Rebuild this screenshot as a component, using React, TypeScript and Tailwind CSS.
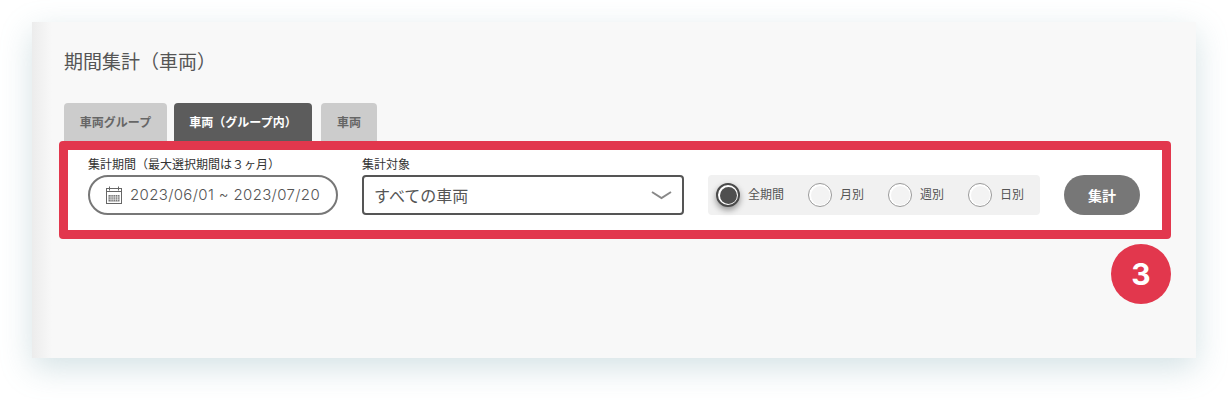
const jp = "font-['Noto_Sans_CJK_JP','Noto_Sans',sans-serif]";

function CalendarIcon() {
  return (
    <svg className="w-4 h-[18px]" viewBox="0 0 16 18" fill="none" stroke="#666" strokeWidth="1">
      <rect x="0.5" y="2.5" width="15" height="15" />
      <path d="M3.500 0.500v4M12.500 0.500v4" />
      <path d="M0.500 5.500h15" />
      <rect x="2.500" y="9" width="11" height="6.500" fill="#777" stroke="none" />
      <path d="M2.500 11h11M2.500 13.200h11M5 9v6.500M7.200 9v6.500M9.400 9v6.500M11.600 9v6.500" stroke="#fff" strokeWidth="0.6" />
    </svg>
  );
}

function Radio({ label, checked, width }: { label: string; checked?: boolean; width: string }) {
  return (
    <label className={`flex items-center gap-[8px] ${width}`}>
      {checked ? (
        <span className="w-6 h-6 rounded-full bg-white border-[2px] border-[#4a4a4a] flex items-center justify-center shadow-[0_3px_6px_rgba(0,0,0,0.4)]">
          <span className="w-[17px] h-[17px] rounded-full bg-[#4f4f4f]" />
        </span>
      ) : (
        <span className="w-6 h-6 rounded-full bg-white border border-[#999] flex items-center justify-center">
          <span className="w-[19px] h-[19px] rounded-full bg-[#f3f3f3]" />
        </span>
      )}
      <span className="text-[12px] text-[#555] leading-none -mt-[2px]">{label}</span>
    </label>
  );
}

export default function App() {
  return (
    <div className={`relative h-[400px] w-[1228px] overflow-hidden bg-white pt-[22px] pl-[32px] ${jp}`}>
      <div className="relative h-[336px] w-[1164px] bg-[#f8f8f8] pt-[25px] pl-[32px] shadow-[0_10px_30px_rgba(120,165,175,0.32)]">
        {/* left edge shade */}
        <div className="absolute left-0 top-0 bottom-0 w-[20px] bg-gradient-to-r from-[#ececec] to-[#f8f8f8]" />

        <h1 className="relative text-[19px] leading-[27px] text-[#555] font-normal">期間集計（車両）</h1>

        {/* Tabs */}
        <div className="relative mt-[29px] flex h-[38px] items-start">
          <div className="h-[38px] w-[103px] rounded-t-[4px] bg-[#cccccc] pt-[10px] text-center text-[12px] leading-[18px] font-bold text-[#666]">車両グループ</div>
          <div className="ml-[7px] h-[38px] w-[138px] rounded-t-[4px] bg-[#5c5c5c] pt-[10px] text-center text-[12px] leading-[18px] font-bold text-white">車両（グループ内）</div>
          <div className="ml-[9px] h-[38px] w-[56px] rounded-t-[4px] bg-[#cccccc] pt-[10px] text-center text-[12px] leading-[18px] font-bold text-[#666]">車両</div>
        </div>

        {/* Filter form, outlined in red */}
        <div className="relative -ml-[5px] h-[98px] w-[1112px] rounded-[4px] border-[9px] border-[#e2374d] bg-white pl-[20px] pt-[5px]">
          <div className="flex items-end">
            <div className="w-[250px]">
              <div className="text-[12px] leading-[18px] text-[#333] whitespace-nowrap">集計期間（最大選択期間は３ヶ月）</div>
              <div className="mt-[2px] flex h-10 items-center gap-[8px] rounded-full border-[2px] border-[#777] bg-white pl-[16px]">
                <CalendarIcon />
                <span className="font-['Inter',sans-serif] text-[15px] font-light text-[#555] tracking-[0.35px] whitespace-nowrap">2023/06/01 ~ 2023/07/20</span>
              </div>
            </div>
            <div className="ml-[24px] w-[322px]">
              <div className="text-[12px] leading-[18px] text-[#333]">集計対象</div>
              <div className="mt-[2px] flex h-10 items-center justify-between rounded-[4px] border-[2px] border-[#555] bg-white pl-[10px] pr-[10px]">
                <span className="text-[16px] leading-[22px] -mt-[1px] text-[#555]">すべての車両</span>
                <svg className="w-[21px] h-[10px]" viewBox="0 0 21 10" fill="none" stroke="#888" strokeWidth="2">
                  <path d="M1 2l9.500 6L20 2" />
                </svg>
              </div>
            </div>
            <div className="ml-[24px] flex h-10 w-[332px] items-center rounded-[4px] bg-[#f1f1f1] pl-[8px]">
              <Radio label="全期間" checked width="w-[92px]" />
              <Radio label="月別" width="w-[80px]" />
              <Radio label="週別" width="w-[80px]" />
              <Radio label="日別" width="w-[72px]" />
            </div>
            <button className="ml-[24px] h-10 w-[76px] rounded-full bg-[#777] text-[14px] font-bold text-white">集計</button>
          </div>
        </div>

        {/* Step badge */}
        <div className="absolute left-[1079px] top-[222px] flex h-[60px] w-[60px] items-center justify-center rounded-full bg-[#e2374d] font-['Inter',sans-serif] text-[30px] font-bold text-white">3</div>
      </div>
    </div>
  );
}
